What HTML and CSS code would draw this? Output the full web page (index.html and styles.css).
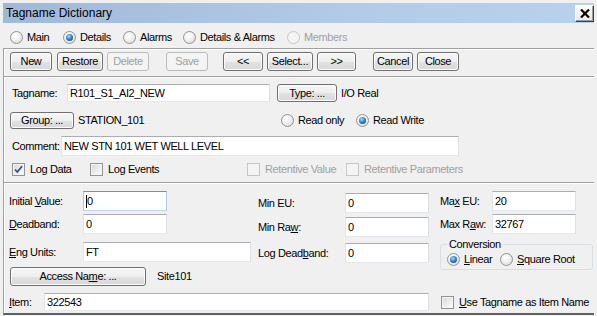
FILE: index.html
```html
<!DOCTYPE html>
<html lang="en">
<head>
    <meta charset="UTF-8">
    <title>Tagname Dictionary</title>
    <link rel="stylesheet" href="styles.css">
</head>
<body>
<div class="window">
    <div class="titlebar">
        <span class="title">Tagname Dictionary</span>
        <span class="close-btn">
            <svg width="10" height="9" viewBox="0 0 10 9"><path d="M1 0.5 L9 8.5 M9 0.5 L1 8.5" stroke="#000" stroke-width="2.2" fill="none"/></svg>
        </span>
    </div>

    <div class="tabs">
        <label class="opt"><span class="radio"></span>Main</label>
        <label class="opt"><span class="radio on"></span>Details</label>
        <label class="opt"><span class="radio"></span>Alarms</label>
        <label class="opt"><span class="radio"></span>Details &amp; Alarms</label>
        <label class="opt off"><span class="radio"></span>Members</label>
    </div>

    <div class="panel">
        <div class="toolbar">
            <button class="btn">New</button>
            <button class="btn w46 ml1">Restore</button>
            <button class="btn" disabled>Delete</button>
            <button class="btn sep" disabled>Save</button>
            <button class="btn w40 sep-s">&lt;&lt;</button>
            <button class="btn w46">Select...</button>
            <button class="btn w39">&gt;&gt;</button>
            <button class="btn w40 sep">Cancel</button>
            <button class="btn">Close</button>
        </div>

        <div class="sect details">
            <div class="row r-tag">
                <span class="lbl tag-lbl">Tagname:</span>
                <div class="field tag-field">R101_S1_AI2_NEW</div>
                <button class="btn type-btn">Type: ...</button>
                <span class="type-val">I/O Real</span>
            </div>
            <div class="row r-group">
                <button class="btn group-btn">Group: ...</button>
                <span class="station">STATION_101</span>
                <label class="opt read-only"><span class="radio"></span>Read only</label>
                <label class="opt"><span class="radio on"></span>Read Write</label>
            </div>
            <div class="row r-comment">
                <span class="lbl comment-lbl">Comment:</span>
                <div class="field comment">NEW STN 101 WET WELL LEVEL</div>
            </div>
            <div class="checks">
                <label class="opt"><span class="check"><svg width="11" height="11" viewBox="0 0 11 11"><path d="M2 5.5 L4.3 8 L9 2.2" stroke="#2c4f8e" stroke-width="1.7" fill="none"/></svg></span>Log Data</label>
                <label class="opt"><span class="check"></span>Log Events</label>
                <label class="opt off"><span class="check"></span>Retentive Value</label>
                <label class="opt off"><span class="check"></span>Retentive Parameters</label>
            </div>
        </div>

        <div class="sect limits">
            <div class="cell">
                <span class="lbl l-left">Initial <u>V</u>alue:</span>
                <div class="field num focus"><span class="caret"></span>0</div>
            </div>
            <div class="cell down2">
                <span class="lbl l-mid">Min EU:</span>
                <div class="field num">0</div>
            </div>
            <div class="cell">
                <span class="lbl l-right">Ma<u>x</u> EU:</span>
                <div class="field num">20</div>
            </div>

            <div class="cell">
                <span class="lbl l-left"><u>D</u>eadband:</span>
                <div class="field num">0</div>
            </div>
            <div class="cell down3">
                <span class="lbl l-mid">Min Ra<u>w</u>:</span>
                <div class="field num">0</div>
            </div>
            <div class="cell">
                <span class="lbl l-right">Max R<u>a</u>w:</span>
                <div class="field num">32767</div>
            </div>

            <div class="cell">
                <span class="lbl l-left"><u>E</u>ng Units:</span>
                <div class="field units">FT</div>
            </div>
            <div class="cell down1">
                <span class="lbl l-mid">Log Dead<u>b</u>and:</span>
                <div class="field num">0</div>
            </div>
            <fieldset class="conversion">
                <legend>Conversion</legend>
                <div class="conv-opts">
                    <label class="opt linear"><span class="radio on"></span><span><u>L</u>inear</span></label>
                    <label class="opt"><span class="radio"></span><span><u>S</u>quare Root</span></label>
                </div>
            </fieldset>

            <div class="cell wide">
                <button class="btn access-btn">Access Na<u>m</u>e: ...</button>
                <span class="site">Site101</span>
            </div>

            <div class="cell wide">
                <span class="lbl item-lbl"><u>I</u>tem:</span>
                <div class="field item">322543</div>
            </div>
            <div class="cell use-tag">
                <label class="opt"><span class="check"></span><span><u>U</u>se Tagname as Item Name</span></label>
            </div>
        </div>
    </div>
</div>
</body>
</html>
```

FILE: styles.css
```css
* {
    box-sizing: border-box;
}
body {
    margin: 0;
    font-family: "Liberation Sans", Arial, sans-serif;
    font-size: 11px;
    letter-spacing: -0.38px;
    line-height: 13px;
    color: #000;
    background: #f0f0f0;
}
.window {
    width: 597px;
    padding: 3px 3px 1px;
    background: #f0f0f0;
}

/* title bar */
.titlebar {
    height: 20px;
    display: flex;
    justify-content: space-between;
    align-items: center;
    padding-left: 3px;
    background: linear-gradient(to right, #9fb9d9, #b3cbe6 60%, #b9d2ec);
    font-size: 12px;
    letter-spacing: 0;
}
.close-btn {
    width: 19px;
    height: 17px;
    align-self: flex-start;
    margin-top: 2px;
    display: flex;
    align-items: center;
    justify-content: center;
    background: linear-gradient(#fdfdfd, #e6e6e6);
    border: 1px solid;
    border-color: #fff #404040 #404040 #fff;
    box-shadow: inset -1px -1px #a0a0a0;
}

/* radio / checkbox */
.opt {
    display: flex;
    align-items: center;
    gap: 4px;
    white-space: nowrap;
}
.radio {
    width: 13px;
    height: 13px;
    flex: none;
    border-radius: 50%;
    border: 1px solid #939393;
    background: radial-gradient(circle at 40% 35%, #fff 0, #f2f2f2 40%, #d4d4d4 100%);
    display: flex;
    align-items: center;
    justify-content: center;
}
.radio.on::after {
    content: "";
    width: 7px;
    height: 7px;
    border-radius: 50%;
    background: radial-gradient(circle at 40% 35%, #a6dcff 0, #2f7cc6 50%, #0e3b77 100%);
}
.check {
    width: 13px;
    height: 13px;
    flex: none;
    border: 1px solid #939393;
    background: linear-gradient(135deg, #d6d6d6, #fff);
    box-shadow: inset 0 0 0 1px #f4f4f4;
    display: flex;
    align-items: center;
    justify-content: center;
    margin-right: 1px;
}
.off {
    color: #a0a0a0;
}
.off .radio,
.off .check {
    border-color: #c6c6c6;
    background: #f4f4f4;
    box-shadow: none;
}

.tabs {
    height: 25px;
    padding: 8px 0 0 7px;
    display: grid;
    grid-template-columns: 53px 60px 60px 104px auto;
    align-items: start;
}

/* main panel */
.panel {
    border-top: 1px solid #a0a0a0;
    border-left: 1px solid #a0a0a0;
    border-bottom: 2px solid #5f5f5f;
    box-shadow: inset 1px 1px #fff;
}
.sect {
    border-top: 1px solid #a0a0a0;
    box-shadow: inset 0 1px #fff;
}

/* buttons */
.btn {
    font: inherit;
    letter-spacing: inherit;
    color: #000;
    height: 19px;
    width: 42px;
    padding: 0;
    border: 1px solid #707070;
    border-radius: 3px;
    background: linear-gradient(#f6f6f6, #eeeeee 50%, #e2e2e2 51%, #d8d8d8);
    box-shadow: inset 0 0 0 1px #fbfbfb;
    flex: none;
}
.btn:disabled {
    color: #a0a0a0;
    border-color: #b8bcbf;
    background: #f4f4f4;
    box-shadow: none;
}
.toolbar {
    display: flex;
    gap: 4px;
    padding: 3px 0 5px 6px;
}
.w46 { width: 46px; }
.w40 { width: 40px; }
.w39 { width: 39px; }
.ml1 { margin-left: 1px; }
.sep { margin-left: 13px; }
.sep-s { margin-left: 11px; }

/* text fields */
.field {
    height: 20px;
    flex: none;
    display: flex;
    align-items: center;
    padding: 0 2px;
    background: #fff;
    border: 1px solid;
    border-color: #abadb3 #dbdfe6 #e3e9ef #e2e3ea;
    white-space: nowrap;
    overflow: hidden;
}
.field.focus {
    border-color: #5f96c9 #a9cbe8 #b9d7ef #a9cbe8;
}
.caret {
    width: 1px;
    height: 13px;
    background: #000;
}
.lbl {
    flex: none;
    white-space: nowrap;
}

/* details */
.details {
    padding: 7px 0 6px 4px;
}
.row {
    display: flex;
    align-items: center;
}
.r-tag { height: 18px; }
.tag-lbl { width: 55px; margin-left: 4px; }
.tag-field { width: 203px; height: 18px; }
.type-btn { width: 60px; height: 18px; margin-left: 7px; }
.type-val { margin-left: 4px; }

.r-group { height: 17px; margin-top: 10px; }
.group-btn { width: 64px; height: 17px; margin-left: 2px; }
.station { width: 207px; padding-left: 4px; flex: none; }
.read-only { width: 75px; }

.r-comment { height: 20px; margin-top: 7px; }
.comment-lbl { width: 49px; margin-left: 4px; }
.comment { width: 398px; }

.checks {
    height: 13px;
    margin-top: 7px;
    padding-left: 4px;
    display: grid;
    grid-template-columns: 78px 157px 99px auto;
    align-items: center;
}

/* limits */
.limits {
    padding: 8px 0 1px 5px;
    display: grid;
    grid-template-columns: 249px 182px 153px;
    grid-template-rows: 23px 28px 25px 26px 19px;
    align-items: start;
}
.cell {
    display: flex;
    align-items: center;
}
.down1 { margin-top: 1px; }
.down2 { margin-top: 2px; }
.down3 { margin-top: 3px; }
.l-left { width: 74px; }
.l-mid { width: 87px; }
.l-right { width: 52px; }
.num { width: 84px; }
.units { width: 168px; }
.wide { grid-column: 1 / 3; }

.conversion {
    grid-row: span 2;
    margin: -4px 0 0;
    padding: 0 6px 3px;
    min-width: 0;
    border: 1px solid #d5dfe5;
    border-radius: 3px;
}
.conversion legend {
    padding: 0 2px;
    line-height: 13px;
}
.conv-opts {
    display: flex;
    margin-top: 2px;
}
.linear { width: 53px; }

.access-btn { width: 136px; height: 19px; margin-left: 1px; }
.site { margin-left: 11px; }

.wide .field.item { width: 385px; height: 18px; }
.item-lbl { width: 35px; }
.use-tag { height: 18px; margin-left: 1px; }
```
